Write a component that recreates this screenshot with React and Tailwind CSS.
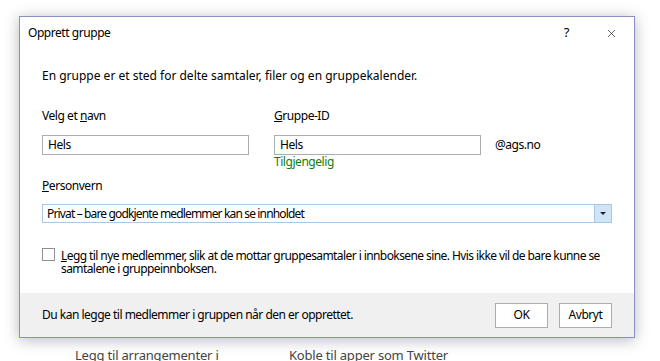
import { X } from 'lucide-react';

function TextField({ value }) {
  return (
    <div className="flex h-[20px] w-[207px] items-center border border-[#acacac] bg-white pl-[5px] leading-none">
      {value}
    </div>
  );
}

export default function App() {
  return (
    <div className="relative h-[361px] w-[660px] overflow-hidden bg-white font-['Segoe_UI','Noto_Sans',sans-serif] text-[12px] tracking-[-0.45px] text-black">
      <div className="ml-[19px] mt-[16px] flex h-[322px] w-[616px] flex-col border border-[#8a8fc2] bg-white shadow-[0_2px_14px_rgba(0,0,0,0.28)]">
        {/* title bar */}
        <div className="flex h-[32px] items-center pl-[8px] pr-[16px]">
          <span>Opprett gruppe</span>
          <span className="ml-auto mr-[36px] text-[13px]">?</span>
          <X className="h-[13px] w-[13px]" strokeWidth={1.1} />
        </div>

        {/* body */}
        <div className="px-[22px] leading-[16px]">
          <p className="mt-[19px] tracking-normal">En gruppe er et sted for delte samtaler, filer og en gruppekalender.</p>

          <div className="mt-[24px] flex">
            <div className="w-[232px]">
              <div>Velg et <span className="underline">n</span>avn</div>
              <div className="mt-[11px]">
                <TextField value="Hels" />
              </div>
            </div>
            <div>
              <div><span className="underline">G</span>ruppe-ID</div>
              <div className="mt-[11px] flex items-center">
                <TextField value="Hels" />
                <span className="ml-[14px]">@ags.no</span>
              </div>
              <div className="leading-[14px] text-[#107c10]">Tilgjengelig</div>
            </div>
          </div>

          <div className="mt-[9px]"><span className="underline">P</span>ersonvern</div>
          <div className="mt-[10px] flex h-[19px] w-[570px] border border-[#a9c8e6] bg-white">
            <div className="flex flex-1 items-center pl-[4px] leading-none tracking-[-0.85px]">
              Privat – bare godkjente medlemmer kan se innholdet
            </div>
            <div className="flex w-[17px] items-center justify-center border-l border-[#a9c8e6] bg-[#cfe4f7]">
              <div className="h-0 w-0 border-x-[3px] border-t-[3px] border-x-transparent border-t-[#222]" />
            </div>
          </div>

          <div className="mt-[24px] flex leading-[13px]">
            <div className="mt-[1px] h-[13px] w-[13px] shrink-0 border border-[#8f8f8f] bg-white" />
            <p className="ml-[6px] mt-[2px] tracking-[-0.58px]">
              <span className="underline">L</span>egg til nye medlemmer, slik at de mottar gruppesamtaler i innboksene sine. Hvis ikke vil de bare kunne se samtalene i gruppeinnboksen.
            </p>
          </div>
        </div>

        {/* footer */}
        <div className="mt-auto flex h-[44px] items-center bg-[#f0f0f0] pl-[22px] pr-[22px]">
          <span className="tracking-[-0.5px]">Du kan legge til medlemmer i gruppen når den er opprettet.</span>
          <div className="ml-auto flex gap-[11px]">
            <button className="h-[25px] w-[53px] border border-[#adadad] bg-white">OK</button>
            <button className="h-[25px] w-[53px] border border-[#adadad] bg-white">Avbryt</button>
          </div>
        </div>
      </div>

      {/* page content behind the dialog */}
      <div className="mt-[8px] flex text-[13px] leading-[18px] tracking-[-0.2px] text-[#444]">
        <span className="ml-[75px] w-[214px]">Legg til arrangementer i</span>
        <span>Koble til apper som Twitter</span>
      </div>
    </div>
  );
}
